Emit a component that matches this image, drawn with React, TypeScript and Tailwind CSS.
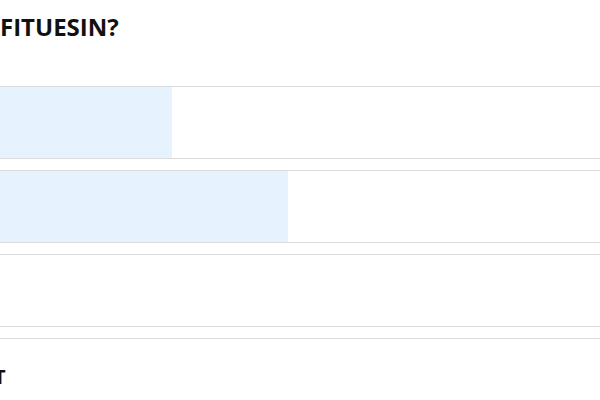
import React from 'react';

const options = [
  { id: 1, pct: 172 },
  { id: 2, pct: 288 },
  { id: 3, pct: 0 },
];

export default function App() {
  return (
    <div className="w-[600px] h-[400px] overflow-hidden bg-white" style={{ fontFamily: '"Open Sans", sans-serif' }}>
      <h2 className="pt-[11px] text-[24px] leading-[32px] font-bold text-[#111] whitespace-nowrap">FITUESIN?</h2>

      <div className="mt-[43px] flex flex-col gap-[11px]">
        {options.map((o) => (
          <div key={o.id} className="h-[73px] border-y border-[#dcdcdc] bg-white">
            {o.pct > 0 && <div className="h-full bg-[#e6f2fd]" style={{ width: o.pct }} />}
          </div>
        ))}
        <div className="border-t border-[#dcdcdc]">
          <p className="-ml-[6px] mt-[24px] text-[20px] leading-[28px] font-bold text-[#111]">T</p>
        </div>
      </div>
    </div>
  );
}
